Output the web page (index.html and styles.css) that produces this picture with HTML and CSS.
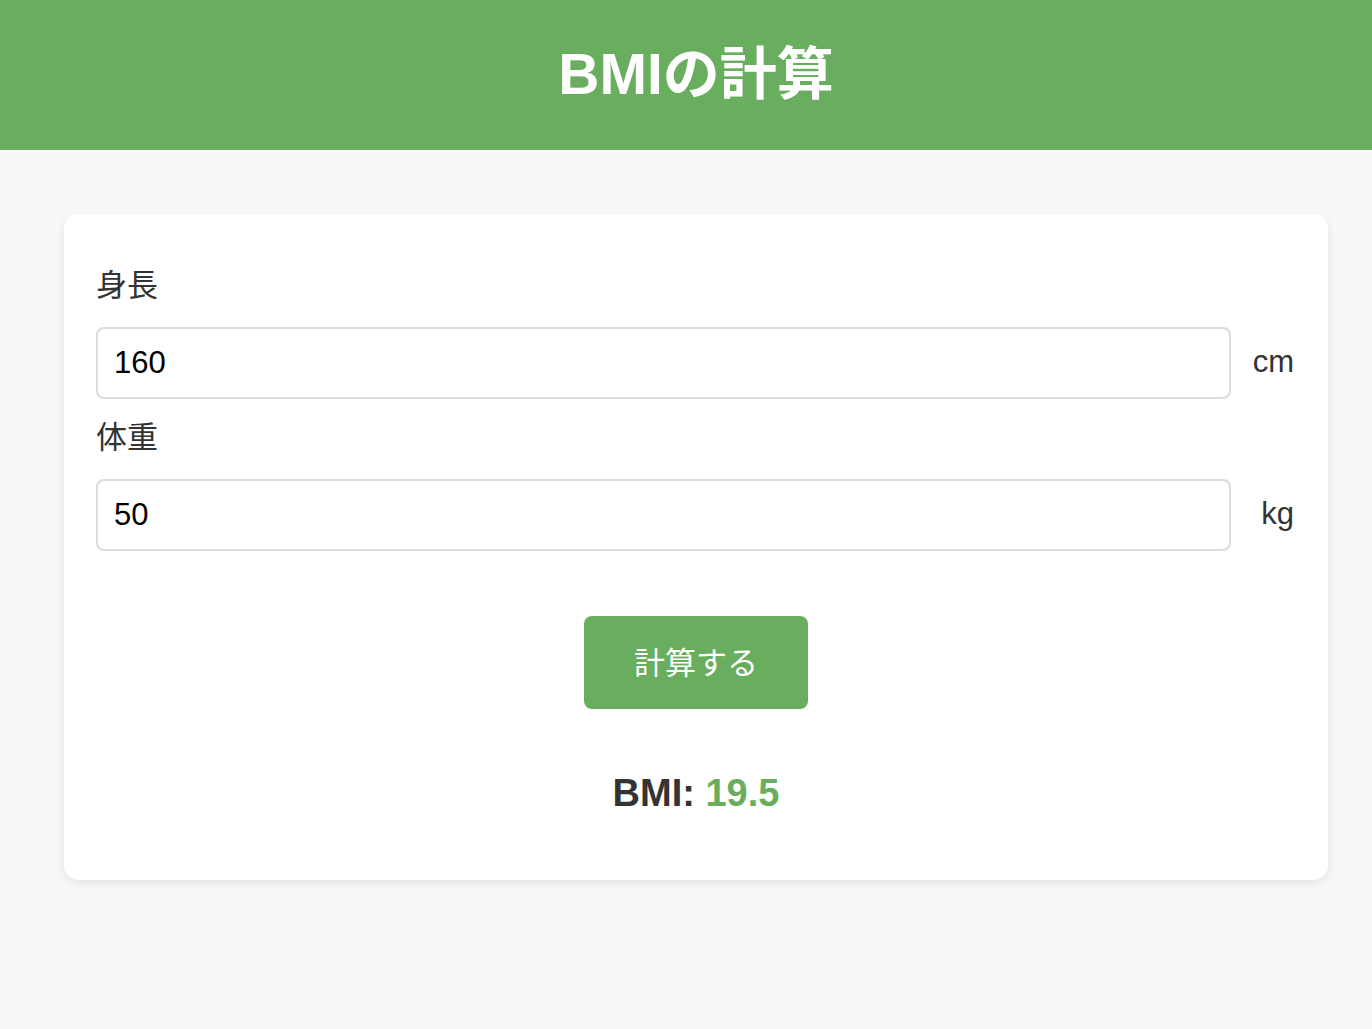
FILE: index.html
```html
<!DOCTYPE html>
<html lang="ja">
<head>
<meta charset="utf-8">
<title>BMIの計算</title>
<link rel="stylesheet" href="styles.css">
</head>
<body>
<header class="header">
  <h1 class="title">BMIの計算</h1>
</header>
<main class="main">
  <section class="card">
    <div class="group">
      <label class="label" for="height">身長</label>
      <div class="row">
        <input class="field" id="height" type="text" value="160">
        <span class="unit">cm</span>
      </div>
    </div>
    <div class="group">
      <label class="label" for="weight">体重</label>
      <div class="row">
        <input class="field" id="weight" type="text" value="50">
        <span class="unit">kg</span>
      </div>
    </div>
    <div class="actions">
      <button class="btn" type="button">計算する</button>
    </div>
    <p class="result">BMI: <span class="value">19.5</span></p>
  </section>
</main>
</body>
</html>
```
FILE: styles.css
```css
* { box-sizing: border-box; }
body {
  margin: 0;
  background: #f8f8f8;
  font-family: "Liberation Sans", "Noto Sans CJK JP", sans-serif;
  color: #333;
}
.header {
  background: #69ae5e;
  height: 150px;
  display: flex;
  align-items: center;
  justify-content: center;
  padding-left: 20px;
}
.title {
  margin: 0;
  color: #fff;
  font-size: 57px;
  font-weight: 700;
  line-height: 1;
  padding-bottom: 2px;
}
.main {
  padding: 64px 44px 64px 64px;
}
.card {
  background: #fff;
  border-radius: 14px;
  box-shadow: 0 3px 10px rgba(0,0,0,0.09);
  padding: 54px 32px 64px 32px;
}
.group {
  margin-bottom: 21px;
}
.label {
  display: block;
  font-size: 31px;
  line-height: 36px;
  margin-bottom: 23px;
  color: #333;
}
.row {
  display: flex;
  align-items: center;
}
.field {
  flex: 1;
  height: 72px;
  border: 2px solid #dcdcdc;
  border-radius: 8px;
  padding: 0 16px;
  font-family: "Liberation Sans", "Noto Sans CJK JP", sans-serif;
  font-size: 31px;
  color: #000;
  background: #fff;
  outline: none;
}
.unit {
  width: 63px;
  margin-right: 2px;
  text-align: right;
  font-size: 31px;
  color: #333;
  padding-bottom: 2px;
}
.actions {
  display: flex;
  justify-content: center;
  margin-top: 65px;
}
.btn {
  width: 224px;
  height: 93px;
  background: #69ae5e;
  color: #fff;
  border: none;
  border-radius: 8px;
  font-family: "Liberation Sans", "Noto Sans CJK JP", sans-serif;
  font-size: 31px;
  padding: 0 0 5px 0;
}
.result {
  margin: 61px 0 0;
  text-align: center;
  font-size: 38px;
  line-height: 46px;
  font-weight: 700;
  color: #333;
}
.value {
  color: #69ae5e;
}
```
